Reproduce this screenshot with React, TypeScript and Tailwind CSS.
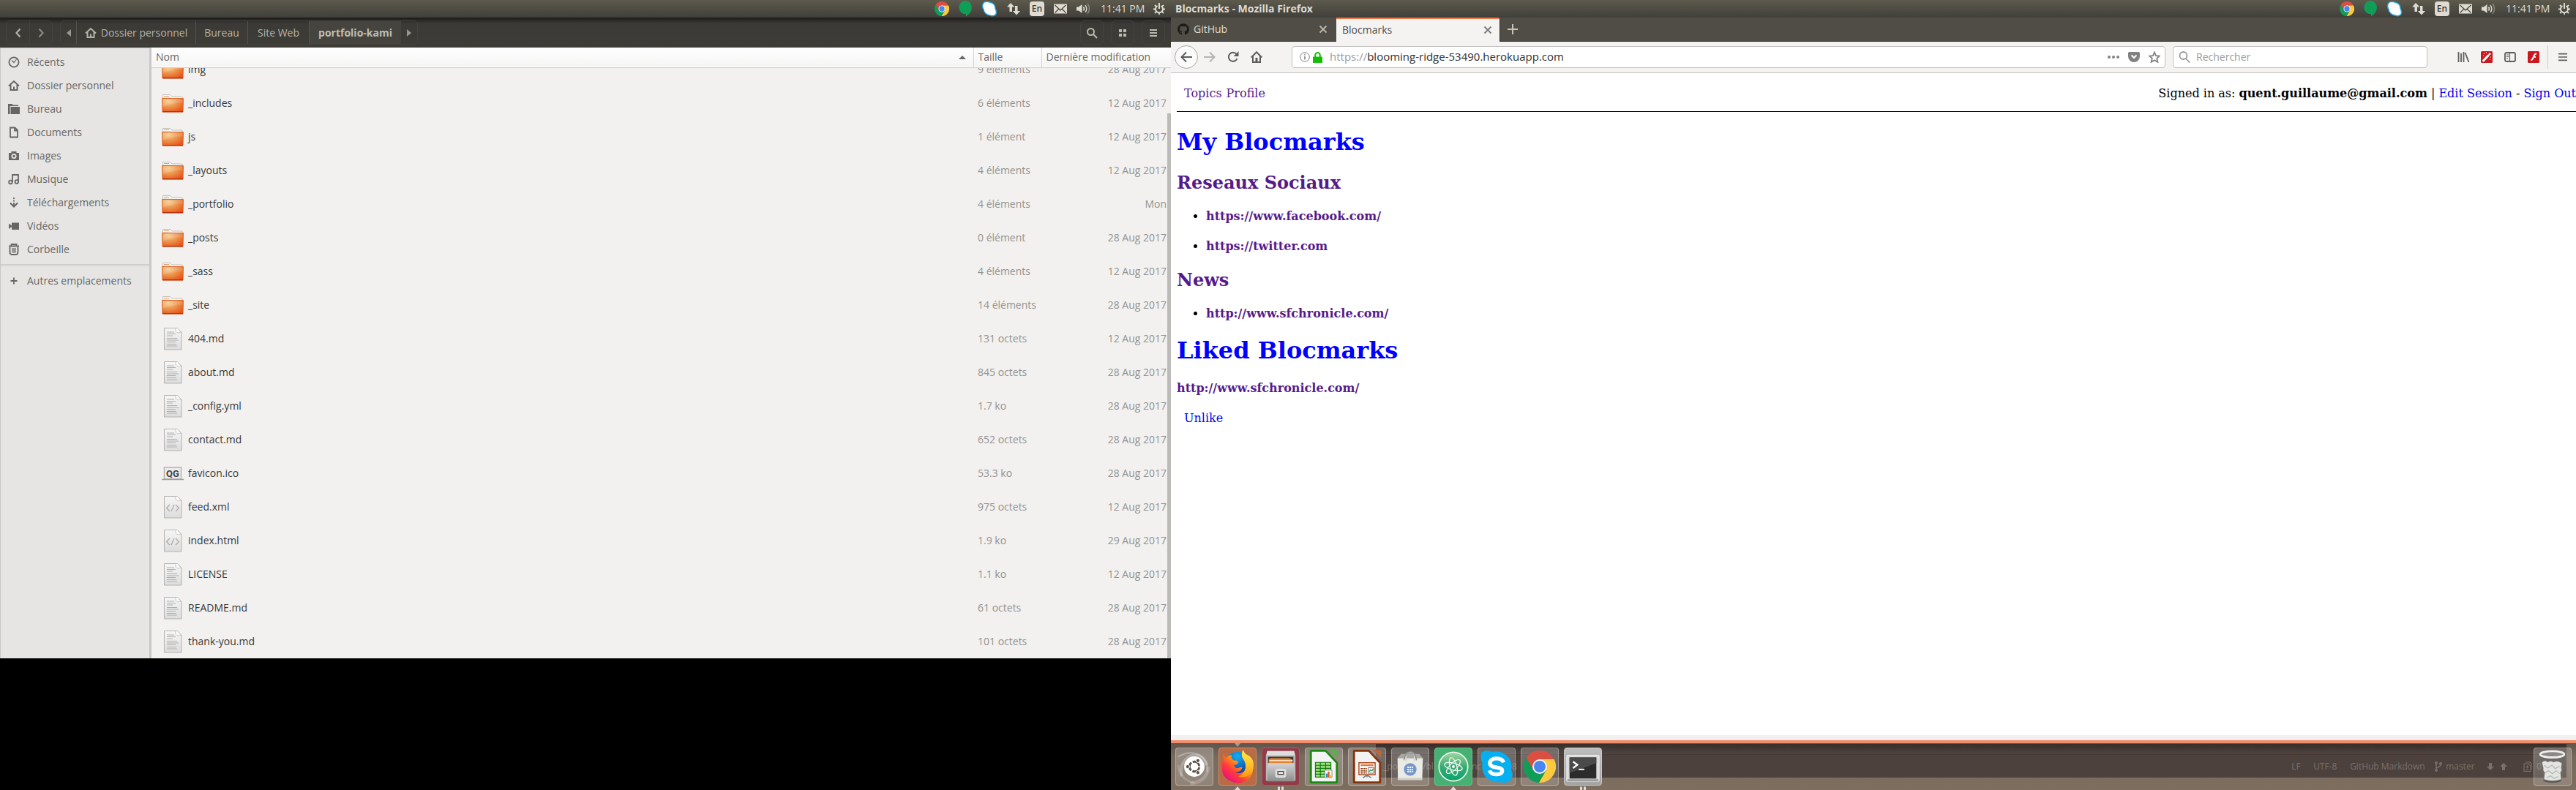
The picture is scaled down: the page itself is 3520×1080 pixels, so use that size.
import React from "react";
import { FaGithub } from "react-icons/fa";

const UI = "font-['Open_Sans','Noto_Sans',sans-serif]";

/* ---------- shared drawings ---------- */

function ChromeLogo({ className }: { className: string }) {
  return (
    <svg viewBox="2 2 44 44" className={className} aria-hidden="true">
      <path d="M43.6 14A22 22 0 0 0 5.54 12.03L15.34 29 24 24V14Z" fill="#db4f43" />
      <path d="M43.6 14A22 22 0 0 1 22.86 45.97L32.66 29 24 24V14Z" fill="#fdca3e" />
      <path d="M22.86 45.97A22 22 0 0 1 5.54 12.03L15.34 29 24 24 32.66 29Z" fill="#109d58" />
      <circle cx="24" cy="24" r="10" fill="#f4f4f4" />
      <circle cx="24" cy="24" r="8" fill="#4a86f0" />
    </svg>
  );
}

function HomeIcon({ className }: { className: string }) {
  return (
    <svg viewBox="0 0 16 16" className={className} fill="none" stroke="currentColor" strokeWidth="2" aria-hidden="true">
      <path d="M1 8.5 8 2l7 6.5M3.5 7v7h9V7M8 14V9.5" />
    </svg>
  );
}

/* ---------- top panel ---------- */

function Tray() {
  return (
    <div className="flex items-center gap-[13px] text-[#dfdbd2]">
      <ChromeLogo className="size-5" />
      <svg viewBox="0 0 18 22" className="h-[22px] w-[18px]" aria-hidden="true">
        <path d="M9 0a9 9 0 0 1 9 9.3C18 14 14.500 18.500 10 21.500V18.300A9 9 0 1 1 9 0Z" fill="#109d58" />
      </svg>
      <svg viewBox="0 0 22 22" className="size-[22px]" aria-hidden="true">
        <path d="M4 2C7 0 10 1.500 13 2.500c4 1 6 4 6 8 1.500 3 2.500 6 .5 8.500-2 2-5 2-8 1C7 19.500 3.500 16 3 12 1 9 .8 4.500 4 2Z" fill="#fff" stroke="#1ba4dd" strokeWidth="1.500" />
      </svg>
      <svg viewBox="0 0 18 18" className="size-[18px]" fill="currentColor" aria-hidden="true">
        <path d="M5 1 0 6.500h3.500V13h3.500V6.500h3.500ZM13 17.500l5-5.500h-3.500V5H11v7H7.800Z" />
      </svg>
      <span className="flex size-5 items-center justify-center rounded-sm bg-[#dfdbd2] text-xs font-semibold leading-none text-[#3f3d38]">En</span>
      <svg viewBox="0 0 18 14" className="h-[14px] w-[18px]" aria-hidden="true">
        <rect width="18" height="13" y=".5" fill="currentColor" rx=".5" />
        <path d="m1.500 2 7.500 7 7.500-7M1.500 12.500l5-5M16.500 12.500l-5-5" stroke="#4a4842" strokeWidth="1.300" fill="none" />
      </svg>
      <svg viewBox="0 0 20 16" className="h-4 w-5" fill="none" stroke="currentColor" strokeWidth="1.600" aria-hidden="true">
        <path d="M0 5.500h3L7.500 2v12L3 10.500H0Z" fill="currentColor" stroke="none" />
        <path d="M9.500 5.500a4 4 0 0 1 0 5M12 3.200a7.500 7.500 0 0 1 0 9.600" />
        <path d="M15 1a11 11 0 0 1 0 14" opacity=".4" />
      </svg>
      <span className="w-[59px] whitespace-nowrap text-sm leading-6">11:41 PM</span>
      <svg viewBox="0 0 16 16" className="size-4" fill="none" stroke="currentColor" aria-hidden="true">
        <path d="M5.500 4A5 5 0 1 0 10.500 4" strokeWidth="2" />
        <path d="M8 0v8" strokeWidth="2" />
        <path d="M0 8.500h3M13 8.500h3M2 14l2-2M14 14l-2-2M8 16v-2.500M2 3l2 2M14 3l-2 2" strokeWidth="1.800" />
      </svg>
    </div>
  );
}

function Panel({ title }: { title?: string }) {
  return (
    <header className="flex h-6 shrink-0 items-center justify-between bg-linear-to-b from-[#5d5a4d] to-[#403f3a] pl-[6px] pr-2">
      <h2 className="text-sm font-bold leading-6 text-[#dfdbd2]">{title}</h2>
      <Tray />
    </header>
  );
}

/* ---------- file manager ---------- */

const side = [
  ["Récents", "clock"],
  ["Dossier personnel", "home"],
  ["Bureau", "desk"],
  ["Documents", "doc"],
  ["Images", "cam"],
  ["Musique", "music"],
  ["Téléchargements", "down"],
  ["Vidéos", "video"],
  ["Corbeille", "bin"],
];

function SideIcon({ kind }: { kind: string }) {
  if (kind === "home") return <HomeIcon className="size-4" />;
  const solid = { fill: "currentColor", stroke: "none" };
  return (
    <svg viewBox="0 0 16 16" className="size-4" fill="none" stroke="currentColor" strokeWidth="1.800" aria-hidden="true">
      {kind === "clock" && (<><circle cx="8" cy="8" r="6.600" /><path d="m5 5.500 3 3L11.500 4" strokeWidth="1.200" /></>)}
      {kind === "desk" && (<path {...solid} d="M0 1h6v1.500h8V4H2.500v11H0ZM3.500 5H16v10H3.500Z" />)}
      {kind === "doc" && (<path d="M3 1.500h6.500L13 5v9.500H3ZM9 1.500V5.500h4" />)}
      {kind === "cam" && (<><path {...solid} d="M1 4h3.500V2h7v2H15v10H1Z" /><circle cx="8" cy="8.500" r="2.700" stroke="#e6e5e3" /></>)}
      {kind === "music" && (<><path d="M6 12V2h8v9" /><circle cx="3.500" cy="12" r="2.300" /><circle cx="11.800" cy="11.500" r="2.300" /></>)}
      {kind === "down" && (<><path d="M8 1v2M8 4.500v2M8 8v5" /><path d="m3 8.500 5 5 5-5" strokeWidth="2.200" /></>)}
      {kind === "video" && (<path {...solid} d="M5 3.500h10v9.500H5ZM1 4.500l4 3v1.500l-4 3Z" />)}
      {kind === "bin" && (<><path d="M1 3.500h14M4.500 3.500V1h7v2.500" /><path d="M2.500 5v6.500Q2.500 15 5 15h6q2.500 0 2.500-3.500V5" /><path d="M6 6v6.500M8 6v7M10 6v6.500" strokeWidth="1.200" /></>)}
      {kind === "plus" && (<path d="M8 3.500v9M3.500 8h9" />)}
    </svg>
  );
}

const files: [string, string, string, string][] = [
  ["img", "9 éléments", "28 Aug 2017", "folder"],
  ["_includes", "6 éléments", "12 Aug 2017", "folder"],
  ["js", "1 élément", "12 Aug 2017", "folder"],
  ["_layouts", "4 éléments", "12 Aug 2017", "folder"],
  ["_portfolio", "4 éléments", "Mon", "folder"],
  ["_posts", "0 élément", "28 Aug 2017", "folder"],
  ["_sass", "4 éléments", "12 Aug 2017", "folder"],
  ["_site", "14 éléments", "28 Aug 2017", "folder"],
  ["404.md", "131 octets", "12 Aug 2017", "text"],
  ["about.md", "845 octets", "28 Aug 2017", "text"],
  ["_config.yml", "1.7 ko", "28 Aug 2017", "text"],
  ["contact.md", "652 octets", "28 Aug 2017", "text"],
  ["favicon.ico", "53.3 ko", "28 Aug 2017", "ico"],
  ["feed.xml", "975 octets", "12 Aug 2017", "code"],
  ["index.html", "1.9 ko", "29 Aug 2017", "code"],
  ["LICENSE", "1.1 ko", "12 Aug 2017", "text"],
  ["README.md", "61 octets", "28 Aug 2017", "text"],
  ["thank-you.md", "101 octets", "28 Aug 2017", "text"],
];

function FileIcon({ kind }: { kind: string }) {
  return (
    <svg viewBox="0 0 32 32" className="size-8 shrink-0" aria-hidden="true">
      {kind === "folder" && (
        <>
          <path d="M2.500 9V4.500h10L15 7h14v3Z" fill="#f8f7f6" stroke="#c2bfba" />
          <path d="M4 6.500h7" stroke="#ee9a66" />
          <path d="M1.500 9.500h29l-.5 18.500H2Z" fill="url(#folder)" stroke="#d9692f" />
          <path d="M2 27.700h28" stroke="#b5300c" strokeWidth="1.300" />
          <path d="M2.500 10.500h27v5Q18 15 2.500 21Z" fill="#fff" opacity=".14" />
        </>
      )}
      {(kind === "text" || kind === "code") && (
        <>
          <path d="M4.500 1.500h18l5.500 6v23.500H4.500Z" fill="url(#paper)" stroke="#b4b3b1" />
          <path d="M20 1.500q-1 6 3.500 6.500 3-1.500 4.500 0l-5.500-6.500Z" fill="#fafafa" stroke="#bdbcba" strokeWidth=".8" />
          {kind === "text" ? (
            <path d="M8 7h10M8 9.500h12M8 12h8M8 15.500h14M8 18h16M8 20.500h12M8 23.500h13M8 26h14" stroke="#b1b0ae" strokeWidth="1" />
          ) : (
            <path d="m12 13-4.500 4.500L12 22M20 13l4.500 4.500L20 22M18 13l-4 9" stroke="#a8a7a5" strokeWidth="1.200" fill="none" />
          )}
        </>
      )}
      {kind === "ico" && (
        <>
          <path d="M4.500 8h23v16h-23Z" fill="#ececec" stroke="#b4b3b1" strokeWidth="1.500" />
          <path d="M1 24.500h30" stroke="#a09f9d" strokeWidth="1.500" />
          <text x="16" y="21" textAnchor="middle" fontSize="13" fontWeight="bold" fill="#444" fontFamily="Roboto, sans-serif">QG</text>
        </>
      )}
    </svg>
  );
}

const headBtn = "flex h-[33px] w-8 items-center justify-center rounded-md border border-[#45433f] text-[#bdbbae]";
const crumb = "flex items-center justify-center border-l border-[#55534c]";

function FileManager() {
  return (
    <section className={`flex flex-col bg-[#f2f1ef] text-sm ${UI}`}>
      <svg className="absolute size-0" aria-hidden="true">
        <defs>
          <radialGradient id="folder" cx=".3" cy=".2" r="1">
            <stop offset="0" stopColor="#f5cb8a" />
            <stop offset=".5" stopColor="#eb8b44" />
            <stop offset="1" stopColor="#e8430c" />
          </radialGradient>
          <linearGradient id="paper" x2="0" y2="1">
            <stop offset="0" stopColor="#f6f6f6" />
            <stop offset="1" stopColor="#dcdcdc" />
          </linearGradient>
        </defs>
      </svg>
      <div className="flex h-[41px] items-center justify-between bg-linear-to-b from-[#1d1c1a] via-[#3c3a36] via-20% to-[#3e3c37] px-2 text-[#b5b3a8]">
        <div className="flex items-center gap-[10px]">
          <div className="flex h-[33px] rounded-md border border-[#45433f]">
            <button type="button" aria-label="Précédent" className="flex w-8 items-center justify-center border-r border-[#45433f]">
              <svg viewBox="0 0 10 14" className="h-[14px] w-[10px]" fill="none" stroke="currentColor" strokeWidth="2.200"><path d="M7.500 1.500 2.500 7l5 5.500" /></svg>
            </button>
            <button type="button" aria-label="Suivant" className="flex w-[30px] items-center justify-center text-[#8b897f]">
              <svg viewBox="0 0 10 14" className="h-[14px] w-[10px]" fill="none" stroke="currentColor" strokeWidth="2.200"><path d="m2.500 1.500 5 5.500-5 5.500" /></svg>
            </button>
          </div>
          <nav className="flex h-[33px] overflow-hidden rounded-md border border-[#45433f]" aria-label="Chemin">
            <button type="button" aria-label="Reculer" className="flex w-[21px] items-center justify-center">
              <svg viewBox="0 0 6 10" className="h-[10px] w-[6px]" fill="#9a988d"><path d="M6 0v10L0 5Z" /></svg>
            </button>
            <button type="button" className={`${crumb} w-[163px] gap-[6px]`}><HomeIcon className="size-4" />Dossier personnel</button>
            <button type="button" className={`${crumb} w-[71px]`}>Bureau</button>
            <button type="button" className={`${crumb} w-[84px]`}>Site Web</button>
            <button type="button" className={`${crumb} w-[126px] bg-[#46443f] font-bold text-[#c0beb2]`}>portfolio-kami</button>
            <button type="button" aria-label="Avancer" className="flex w-[22px] items-center justify-center">
              <svg viewBox="0 0 6 10" className="h-[10px] w-[6px]" fill="#9a988d"><path d="M0 0v10l6-5Z" /></svg>
            </button>
          </nav>
        </div>
        <div className="flex gap-[10px]">
          <button type="button" aria-label="Rechercher" className={headBtn}>
            <svg viewBox="0 0 16 16" className="size-4" fill="none" stroke="currentColor" strokeWidth="2"><circle cx="6.500" cy="6.500" r="4.500" /><path d="m10 10 5 5" /></svg>
          </button>
          <button type="button" aria-label="Grille" className={headBtn}>
            <svg viewBox="0 0 16 16" className="size-4" fill="currentColor"><path d="M3 3h4v4H3ZM9 3h4v4H9ZM3 9h4v4H3ZM9 9h4v4H9Z" /></svg>
          </button>
          <button type="button" aria-label="Menu" className={headBtn}>
            <svg viewBox="0 0 16 16" className="size-4" fill="currentColor"><path d="M3 3h10v2H3ZM3 7h10v2H3ZM3 11h10v2H3Z" /></svg>
          </button>
        </div>
      </div>
      <div className="flex">
        <aside className="w-[207px] shrink-0 border-l border-r-3 border-t border-[#c9c8c6] bg-[#e6e5e3] pt-[3px] text-[#676664]">
          <ul>
            {side.map(([label, kind]) => (
              <li key={label}>
                <a href="#" className="flex h-8 items-center gap-[10px] pl-[10px]"><SideIcon kind={kind} />{label}</a>
              </li>
            ))}
          </ul>
          <div className="my-1 h-[3px] border-y border-[#cdccca]" />
          <a href="#" className="flex h-8 items-center gap-[10px] pl-[10px]"><SideIcon kind="plus" />Autres emplacements</a>
        </aside>
        <div className="relative grow">
          <table className="w-full table-fixed border-collapse text-left">
            <thead className="text-[#676664]">
              <tr className="h-[27px] border-b border-[#cfcecc] bg-linear-to-b from-white to-[#f5f5f4]">
                <th className="p-0 pl-[6px] pr-[10px] font-normal">
                  <div className="flex items-center justify-between">
                    Nom
                    <svg viewBox="0 0 10 5" className="h-[5px] w-[10px]" fill="currentColor" aria-hidden="true"><path d="M5 0l5 5H0Z" /></svg>
                  </div>
                </th>
                <th className="w-[93px] border-l border-[#d4d3d1] p-0 pl-[6px] font-normal">Taille</th>
                <th className="w-[177px] whitespace-nowrap border-l border-[#d4d3d1] p-0 pl-[6px] font-normal">Dernière modification</th>
              </tr>
            </thead>
            <tbody className="text-[#939290]">
              {files.map(([name, size, date, kind], i) => {
                const cell = i === 0 ? "flex h-[25px] items-end overflow-hidden" : "flex h-[46px] items-end";
                return (
                  <tr key={name}>
                    <td className="p-0 pl-[13px] text-[#383838]">
                      <div className={cell}><span className="flex h-[46px] shrink-0 items-center gap-[5px]"><FileIcon kind={kind} />{name}</span></div>
                    </td>
                    <td className="p-0 pl-[6px]">
                      <div className={cell}><span className="flex h-[46px] shrink-0 items-center">{size}</span></div>
                    </td>
                    <td className="p-0 pr-[6px]">
                      <div className={`${cell} justify-end`}><span className="flex h-[46px] shrink-0 items-center">{date}</span></div>
                    </td>
                  </tr>
                );
              })}
            </tbody>
          </table>
          <div className="absolute bottom-0 right-0 top-[90px] w-[5px] bg-[#bcbbba]" />
        </div>
      </div>
    </section>
  );
}

/* ---------- browser ---------- */

function CloseX() {
  return (
    <svg viewBox="0 0 12 12" className="size-3" fill="none" stroke="currentColor" strokeWidth="1.800"><path d="m1.500 1.500 9 9M10.500 1.500l-9 9" /></svg>
  );
}

const link = "text-[#551a8b]";
const navBtn = "flex size-8 items-center justify-center";

function Browser() {
  return (
    <section className="flex grow flex-col bg-white">
      <div className={`flex h-[33px] border-b border-[#33312d] bg-[#504d46] text-sm ${UI}`} role="tablist">
        <div role="tab" className="flex w-[226px] items-center gap-[6px] pl-[9px] pr-3 text-[#dedad0]">
          <FaGithub className="size-4 text-[#1b1a18]" />
          <span className="grow">GitHub</span>
          <button type="button" aria-label="Fermer GitHub" className="text-[#bdb9ae]"><CloseX /></button>
        </div>
        <div role="tab" aria-selected="true" className="-mb-px flex w-[223px] items-center border-t-2 border-[#f07746] bg-[#f4f3f2] pb-px pl-2 pr-[10px] text-[#4c4c4c]">
          <span className="grow">Blocmarks</span>
          <button type="button" aria-label="Fermer Blocmarks" className="text-[#77767a]"><CloseX /></button>
        </div>
        <button type="button" aria-label="Nouvel onglet" className="flex w-[34px] items-center justify-center border-l border-[#33312d] text-[#c9c5bb]">
          <svg viewBox="0 0 14 14" className="size-[14px]" stroke="currentColor" strokeWidth="2"><path d="M7 0v14M0 7h14" /></svg>
        </button>
      </div>

      <div className={`flex h-[43px] items-center border-b border-[#c4c2bf] bg-[#f4f3f2] pl-[5px] text-sm text-[#5d5d5d] ${UI}`}>
        <button type="button" aria-label="Page précédente" className={`${navBtn} rounded-full border border-[#a9a8a6] bg-[#fbfbfb]`}>
          <svg viewBox="0 0 16 16" className="size-4" fill="none" stroke="currentColor" strokeWidth="2"><path d="M16 8H1.500M8 1.500 1.500 8 8 14.500" /></svg>
        </button>
        <button type="button" aria-label="Page suivante" className={`${navBtn} text-[#b5b4b2]`}>
          <svg viewBox="0 0 16 16" className="size-4" fill="none" stroke="currentColor" strokeWidth="2"><path d="M0 8h14.500M8 1.500 14.500 8 8 14.500" /></svg>
        </button>
        <button type="button" aria-label="Actualiser" className={navBtn}>
          <svg viewBox="0 0 16 16" className="size-4" fill="none" stroke="currentColor" strokeWidth="2"><path d="M12.500 4A6 6 0 1 0 13.500 10" /><path d="M15.500 0v7H8.500Z" fill="currentColor" stroke="none" /></svg>
        </button>
        <button type="button" aria-label="Accueil" className={navBtn}>
          <svg viewBox="0 0 16 16" className="size-4" fill="none" stroke="currentColor" strokeWidth="2"><path d="M.8 8.500 8 1.200l7.200 7.300M3 7v8h10V7" /><path d="M6.500 15V9h3v6Z" fill="currentColor" stroke="none" /></svg>
        </button>
        <div className="ml-8 flex h-[30px] grow items-center rounded border border-[#c1bfbc] bg-white pl-[10px] pr-[6px] text-[15px]">
          <svg viewBox="0 0 14 14" className="size-[14px]" fill="none" stroke="#828181" aria-hidden="true"><circle cx="7" cy="7" r="6.300" /><path d="M7 6v4.500M7 3v1.500" strokeWidth="1.600" /></svg>
          <svg viewBox="0 0 14 16" className="ml-1 h-[15px] w-[13px]" aria-hidden="true"><path d="M0 7h14v9H0Z" fill="#12bc00" /><path d="M3.500 8V4.500a3.500 3.500 0 0 1 7 0V8" stroke="#12bc00" strokeWidth="2.200" fill="none" /></svg>
          <label htmlFor="url" className="ml-[10px] text-[#9b9a98]">https://</label>
          <input id="url" className="grow bg-transparent p-0 text-[#2f2f2f] outline-none" defaultValue="blooming-ridge-53490.herokuapp.com" />
          <div className="flex items-center gap-3 text-[#828181]">
            <svg viewBox="0 0 16 16" className="size-4" fill="currentColor"><circle cx="2" cy="8" r="2" /><circle cx="8" cy="8" r="2" /><circle cx="14" cy="8" r="2" /></svg>
            <svg viewBox="0 0 16 16" className="size-4"><path d="M1.500 1h13Q16 1 16 2.500V7A8 8 0 0 1 0 7V2.500Q0 1 1.500 1Z" fill="currentColor" /><path d="m4.500 5.500 3.500 3.500 3.500-3.500" stroke="#fff" strokeWidth="2" fill="none" /></svg>
            <svg viewBox="0 0 16 16" className="size-4" fill="none" stroke="currentColor" strokeWidth="1.800"><path d="m8 1.500 2 4.600 5 .4-3.800 3.300 1.200 5L8 12.200l-4.400 2.600 1.200-5L1 6.500l5-.4Z" /></svg>
          </div>
        </div>
        <div className="ml-[10px] flex h-[30px] w-[348px] items-center gap-[8px] rounded border border-[#c1bfbc] bg-white pl-[7px]">
          <svg viewBox="0 0 16 16" className="size-4" fill="none" stroke="#9b9a98" strokeWidth="1.800" aria-hidden="true"><circle cx="6.500" cy="6" r="5" /><path d="m10 10 5 5.500" /></svg>
          <input aria-label="Rechercher" placeholder="Rechercher" className="grow bg-transparent p-0 outline-none placeholder:text-[#9b9a98]" />
        </div>
        <div className="ml-[41px] flex items-center gap-4">
          <svg viewBox="0 0 16 16" className="size-4" fill="none" stroke="currentColor" strokeWidth="1.800"><path d="M1.500 1v14M5 3v12M8.500 1v14M10.500 2l5 13" /></svg>
          <svg viewBox="0 0 16 16" className="size-4">
            <rect width="16" height="16" rx="1.500" fill="#c9191f" />
            <path d="m3.500 13 6.500-7" stroke="#fff" strokeWidth="3" strokeLinecap="round" />
            <path d="m11 5 2-2.200" stroke="#fff" strokeWidth="2.600" />
            <path d="M4 3h1.500M7 2h1M3 6h1M13 8h1M12 11h1" stroke="#fff" strokeWidth="1.200" />
          </svg>
          <svg viewBox="0 0 16 16" className="size-4" fill="none" stroke="currentColor" strokeWidth="1.800"><rect x="1" y="2" width="14" height="12" rx="2" /><path d="M7.500 2v12M3 5h3M3 7.500h3M3 10h2" strokeWidth="1.200" /></svg>
          <svg viewBox="0 0 16 16" className="size-4"><rect width="16" height="16" rx="1.500" fill="#c9191f" /><path d="M12 3.500Q9 3.500 8 7.500T4.500 12.500M7 7.800h4" stroke="#fff" strokeWidth="1.900" fill="none" /></svg>
        </div>
        <div className="ml-[11px] h-8 w-px bg-[#cfcecc]" />
        <button type="button" aria-label="Ouvrir le menu" className="ml-3 mr-[10px] flex size-4 items-center justify-center">
          <svg viewBox="0 0 14 12" className="h-3 w-[12px]" fill="currentColor"><path d="M0 0h14v2H0ZM0 5h14v2H0ZM0 10h14v2H0Z" /></svg>
        </button>
      </div>

      <main className="grow pl-2 font-['DejaVu_Serif',serif] text-base leading-[19px]">
        <div className="flex h-[53px] items-center justify-between border-b border-black pl-[10px] pt-[3px]">
          <nav className="flex gap-[6px]">
            <a href="#" className={link}>Topics</a>
            <a href="#" className={link}>Profile</a>
          </nav>
          <p className="whitespace-nowrap text-black">
            Signed in as: <strong>quent.guillaume@gmail.com</strong> | <a href="#" className="text-[#0000ee]">Edit Session</a> - <a href="#" className="text-[#0000ee]">Sign Out</a>
          </p>
        </div>
        <h1 className="mt-[23px] text-[32px] font-bold leading-[37px] text-[#0000ff]">My Blocmarks</h1>
        <h2 className="mt-[23px] text-2xl font-bold leading-7"><a href="#" className={link}>Reseaux Sociaux</a></h2>
        <ul className="mt-[22px] list-disc space-y-[22px] pl-10 font-bold">
          <li><a href="#" className={link}>https://www.facebook.com/</a></li>
          <li><a href="#" className={link}>https://twitter.com</a></li>
        </ul>
        <h2 className="mt-[23px] text-2xl font-bold leading-7"><a href="#" className={link}>News</a></h2>
        <ul className="mt-[22px] list-disc pl-10 font-bold">
          <li><a href="#" className={link}>http://www.sfchronicle.com/</a></li>
        </ul>
        <h1 className="mt-[23px] text-[32px] font-bold leading-[37px] text-[#0000ff]">Liked Blocmarks</h1>
        <p className="mt-[23px] font-bold"><a href="#" className={link}>http://www.sfchronicle.com/</a></p>
        <p className="mt-[22px] pl-[10px]"><a href="#" className="text-[#0000ee]">Unlike</a></p>
      </main>
      <div className="h-[11px] shrink-0 border-b-4 border-[#f28c69] bg-[#f1f0ee]" />
    </section>
  );
}

/* ---------- launcher ---------- */

const svgTile = "size-full";

function OfficeDoc({ dark, mid, children }: { dark: string; mid: string; children: React.ReactNode }) {
  return (
    <svg viewBox="0 0 52 52" className={svgTile} aria-hidden="true">
      <path d="M8 2h21l17 18v28q0 2-2 2H8q-2 0-2-2V4q0-2 2-2Z" fill={dark} />
      <path d="M9 5h19l15 16v26H9Z" fill="#f3f3f3" />
      <path d="M34 2h10q2 0 2 2v10Z" fill={mid} />
      {children}
    </svg>
  );
}

function Art({ app }: { app: string }) {
  switch (app) {
    case "Dash":
      return (
        <svg viewBox="0 0 52 52" className={svgTile} aria-hidden="true">
          <g fill="none" stroke="#fff">
            <path d="M3 12Q20 2 34 10 46 18 44 34" opacity=".3" strokeWidth="2" />
            <path d="M8 40Q4 20 20 11 38 6 44 24" opacity=".25" strokeWidth="4" />
            <path d="M20 50Q44 48 46 26" opacity=".2" strokeWidth="5" />
            <path d="M3 24Q5 44 26 49" opacity=".18" strokeWidth="3" />
          </g>
          <circle cx="26" cy="26" r="14.500" fill="#fff" />
          <circle cx="26" cy="26" r="7" fill="none" stroke="#5c4f47" strokeWidth="3" strokeDasharray="12.700 2" strokeDashoffset="-1" />
          <g fill="#5c4f47" stroke="#fff"><circle cx="16.500" cy="26" r="2.700" /><circle cx="31" cy="17.500" r="2.700" /><circle cx="31" cy="34.500" r="2.700" /></g>
        </svg>
      );
    case "Firefox":
      return (
        <svg viewBox="0 0 52 52" className={svgTile} aria-hidden="true">
          <defs>
            <linearGradient id="fx" x1=".9" y1=".1" x2=".2" y2=".9"><stop offset="0" stopColor="#ffe228" /><stop offset=".4" stopColor="#ff9417" /><stop offset=".7" stopColor="#ff3b3c" /><stop offset="1" stopColor="#e8127a" /></linearGradient>
            <linearGradient id="fy" x2="0" y2="1"><stop offset="0" stopColor="#fff04d" /><stop offset="1" stopColor="#ff9a12" /></linearGradient>
            <radialGradient id="globe" cx=".5" cy=".2" r=".8"><stop offset="0" stopColor="#0fb0f5" /><stop offset="1" stopColor="#123a9c" /></radialGradient>
          </defs>
          <circle cx="26" cy="21" r="16" fill="url(#globe)" />
          <path d="M6 7q1 5 4 7 3-5 8-4-2 4 2 7 6 0 7 3-1 3-6 4 1 5 6 4 4-2 6-1-2 7-10 7 6 3 12-1 8-7 4-17l9 6q2 16-9 24-11 6-22 1Q3 41 4 26 4 19 6 16Z" fill="url(#fx)" />
          <path d="M34 2q-4 7 0 13 6 8 2 17-3 6-9 8 9 3 17-3 7-9 4-19-2-5-7-8-6-3-7-8Z" fill="url(#fy)" />
        </svg>
      );
    case "Fichiers":
      return (
        <svg viewBox="0 0 52 52" className={svgTile} aria-hidden="true">
          <path d="M7 4h38l2 7v35H5V11Z" fill="#b9b9b9" />
          <path d="M7 4h38l1.500 6h-41Z" fill="#dedede" />
          <path d="M8 12h36v10H8Z" fill="#3d3631" />
          <path d="M11 14h27l5 2v6H9v-6Z" fill="#e88332" /><path d="M10 17.500h33" stroke="#fbe3c4" strokeWidth="1.500" />
          <path d="M7 21h38v26H7Z" fill="url(#steel)" />
          <defs><linearGradient id="steel" x2="0" y2="1"><stop offset="0" stopColor="#d4d4d4" /><stop offset="1" stopColor="#8c8c8c" /></linearGradient></defs>
          <rect x="19" y="30" width="14" height="11" rx="2" fill="#d8d8d8" stroke="#f0f0f0" />
          <rect x="22" y="33" width="8" height="4" fill="#eee" stroke="#333" strokeWidth="1.200" />
        </svg>
      );
    case "Calc":
      return (
        <OfficeDoc dark="#188a12" mid="#5fae4c">
          <path d="M14 20h22v21H14Z" fill="#97e07c" />
          <path d="M14 20h22v21H14ZM14 24.200h22M14 28.400h22M14 32.600h22M14 36.800h22M21 20v21M28.500 20v21" stroke="#16780f" strokeWidth="1.200" fill="none" />
          <path d="M27.500 31h10v10.500h-10Z" fill="#fff" stroke="#888" />
          <path d="M29 36h2.500v5H29Z" fill="#2a8ad8" /><path d="M31.500 33H34v8h-2.500Z" fill="#e8541c" /><path d="M34 38h2.500v3H34Z" fill="#f3b71c" />
        </OfficeDoc>
      );
    case "Impress":
      return (
        <OfficeDoc dark="#82340b" mid="#b5673f">
          <path d="M14.500 20.500h23v17h-23Z" fill="#fff" stroke="#a8481a" strokeWidth="1.500" />
          <path d="M17 24h18" stroke="#d97a42" strokeWidth="2.500" />
          <path d="M17 29h9M17 32h9M17 35h9" stroke="#8a3a10" strokeWidth="1.800" strokeDasharray="3 1" />
          <path d="M27.500 27.500h8v8h-8Z" fill="#eef" stroke="#777" /><path d="m29 33 2-2 2 1 2-3" stroke="#2a9a2a" strokeWidth="1.300" fill="none" />
          <path d="m26 38-6 4M26 38l6 4M26 38v3" stroke="#777" strokeWidth="1.500" />
        </OfficeDoc>
      );
    case "Logithèque":
      return (
        <svg viewBox="0 0 52 52" className={svgTile} aria-hidden="true">
          <path d="M13 8h26l5 6H8Z" fill="#a9a8a4" />
          <path d="M8 14h36l-1 31H8.500Z" fill="#ebebe6" /><path d="M8.500 45H43v-3H8.500Z" fill="#cfcfca" />
          <path d="M20 18V10q0-4 6-4t6 4v8" fill="none" stroke="#d2d1cd" strokeWidth="2" />
          <path d="M17 17q2-12 9-12t9 12" fill="none" stroke="#8c8b87" strokeWidth="1.500" />
          <circle cx="26" cy="30" r="9" fill="#7597cb" />
          <path d="M22 26h2v2h-2ZM25 26h2v2h-2ZM28 26h2v2h-2ZM22 29h2v2h-2ZM25 29h2v2h-2ZM28 29h2v2h-2ZM22 32h2v2h-2ZM25 32h2v2h-2ZM28 32h2v2h-2Z" fill="#fff" />
        </svg>
      );
    case "Atom":
      return (
        <svg viewBox="0 0 52 52" className={svgTile} aria-hidden="true">
          <defs><linearGradient id="atom" x2="0" y2="1"><stop offset="0" stopColor="#a3d8a0" /><stop offset=".5" stopColor="#3aab74" /><stop offset="1" stopColor="#0aa26c" /></linearGradient></defs>
          <circle cx="26" cy="26" r="20.500" fill="url(#atom)" stroke="#e9f4ec" strokeWidth="1.800" />
          <g fill="none" stroke="#f0f8f2" strokeWidth="1.300">
            <ellipse cx="26" cy="26" rx="13" ry="5" transform="rotate(15 26 26)" />
            <ellipse cx="26" cy="26" rx="13" ry="5" transform="rotate(75 26 26)" />
            <ellipse cx="26" cy="26" rx="13" ry="5" transform="rotate(135 26 26)" />
          </g>
          <circle cx="26" cy="26" r="2" fill="#fff" />
        </svg>
      );
    case "Skype":
      return (
        <svg viewBox="0 0 52 52" className={svgTile} aria-hidden="true">
          <path d="M5 6q6-5 14-1Q34 2 43 13q6 8 4 18 4 8-1 14-6 6-14 3-13 2-22-8-6-9-4-19-4-8-1-15Z" fill="#06aff0" />
          <path d="M36 18.500Q34 13 26 13c-6 0-9.500 3-9.500 6.500 0 9 17.500 3.500 17.500 11 0 3-3 5-7.500 5Q18 36 16 30" transform="translate(0 1.500)" fill="none" stroke="#fff" strokeWidth="5.500" />
        </svg>
      );
    case "Chrome":
      return <span className="flex size-full items-center justify-center"><ChromeLogo className="size-11" /></span>;
    case "Terminal":
      return (
        <svg viewBox="0 0 52 52" className={svgTile} aria-hidden="true">
          <rect x="3" y="10" width="46" height="37" rx="1" fill="#d9d9d9" stroke="#f2f2f2" />
          <path d="M4 44h44v3H4Z" fill="#9b9b9b" />
          <rect x="7" y="13" width="38" height="30" fill="#2b2b2b" />
          <path d="M7 13h38v8L7 35Z" fill="#4a4a4a" />
          <path d="m12 19 6 4.500-6 4.500" stroke="#fff" strokeWidth="2.500" fill="none" /><path d="M20 30h8" stroke="#fff" strokeWidth="2" />
        </svg>
      );
    default:
      return (
        <svg viewBox="0 0 52 52" className={svgTile} aria-hidden="true">
          <path d="M9 9h34l-4 36q-13 5-26 0Z" fill="#6f6a66" opacity=".8" />
          <path d="M11 20q5-4 8 0 5-3 8 0 5-3 12 1l-1 7q2 3-1 6l1 10q-12 4-24 0l1-10q-3-2-2-6Z" fill="#e3e5e2" />
          <path d="m14 24 5 4 6-4 5 5 6-4M15 35l5-3 6 4 5-4 5 4M18 42l5-3 5 4 6-3" stroke="#b4b7b2" strokeWidth="1.300" fill="none" />
          <ellipse cx="25.500" cy="8.500" rx="17" ry="4.500" fill="#8b8784" stroke="#eeeeec" strokeWidth="3" />
          <path d="M13 46q13 4 25 0" stroke="#55504d" strokeWidth="1.500" fill="none" />
        </svg>
      );
  }
}

const glass = "bg-linear-to-b from-white/25 to-white/15 border-white/30";
const apps: [string, string, string][] = [
  ["Dash", glass, ""],
  ["Firefox", "bg-[#b86c45] border-[#cf8a66]", "focus"],
  ["Fichiers", "bg-[#913b49] border-[#a85a66]", "two"],
  ["Calc", glass, ""],
  ["Impress", glass, ""],
  ["Logithèque", glass, ""],
  ["Atom", "bg-[#46b173] border-[#6cc58f]", "one"],
  ["Skype", glass, ""],
  ["Chrome", glass, ""],
  ["Terminal", "bg-linear-to-b from-[#bcbcbc] to-[#a3a3a3] border-[#c9c9c9]", "two"],
];

function Tile({ name, look, state }: { name: string; look: string; state: string }) {
  return (
    <button type="button" aria-label={name} className={`relative size-[52px] rounded border ${look}`}>
      <Art app={name} />
      {state === "focus" && (
        <svg viewBox="0 0 8 5" className="absolute -top-[7px] left-[21px] h-[5px] w-2" fill="#a09c99"><path d="M0 0h8L4 5Z" /></svg>
      )}
      {(state === "focus" || state === "one") && (
        <svg viewBox="0 0 8 5" className="absolute -bottom-[7px] left-[21px] h-[5px] w-2" fill="#dddad7"><path d="M0 5h8L4 0Z" /></svg>
      )}
      {state === "two" && (
        <svg viewBox="0 0 8 5" className="absolute -bottom-[7px] left-[21px] h-[5px] w-2" fill="#dddad7"><path d="M0 5V1l1.500-1L3 1v4ZM5 5V1l1.500-1L8 1v4Z" /></svg>
      )}
    </button>
  );
}

function Launcher() {
  return (
    <footer className="relative h-16 shrink-0 bg-linear-to-b from-[#5f554c] via-[#786a5d] via-30% to-[#7e6e60] px-[6px] pt-[6px]">
      <div className={`absolute left-[280px] right-[13px] top-px flex h-[46px] flex-col bg-[#4c413c] text-xs text-[#7b706b] ${UI}`}>
        <div className="h-[15px] border-b border-[#453a36] bg-linear-to-b from-[#352e2b] to-[#51453f]" />
        <div className="flex grow items-center justify-between pl-[10px] pr-[34px]">
          <div className="flex">
            <span className="w-[54px]">_po</span>
            <span className="w-[67px]">/bl</span>
            <span className="w-[55px]">nc</span>
            <span>8</span>
          </div>
          <div className="flex items-center">
            <span className="w-[30px]">LF</span>
            <span className="w-[50px]">UTF-8</span>
            <span className="w-[116px] whitespace-nowrap">GitHub Markdown</span>
            <svg viewBox="0 0 10 14" className="mr-[5px] h-[14px] w-[10px]" fill="none" stroke="currentColor" strokeWidth="1.500"><circle cx="2" cy="2" r="1.300" /><circle cx="2" cy="12" r="1.300" /><circle cx="8" cy="3" r="1.300" /><path d="M2 3v8M8 4q0 3-6 5" /></svg>
            <span className="w-[56px]">master</span>
            <svg viewBox="0 0 28 10" className="mr-[22px] h-[10px] w-7" fill="currentColor"><path d="M3 0h4v5h3l-5 5-5-5h3ZM21 10h4V5h3l-5-5-5 5h3Z" /></svg>
            <svg viewBox="0 0 12 14" className="mr-[6px] h-[14px] w-3" fill="none" stroke="currentColor" strokeWidth="1.200"><path d="M1 3h6l3 3v7.500H1ZM3 1h6l3 3v7M5.500 5.500v4M3.500 7.500h4M3.500 11.500h4" /></svg>
            <span>0</span>
          </div>
        </div>
      </div>
      <nav className="relative flex justify-between" aria-label="Lanceur">
        <div className="flex gap-[7px]">
          {apps.map(([name, look, state]) => (
            <Tile key={name} name={name} look={look} state={state} />
          ))}
        </div>
        <Tile name="Corbeille" look={glass} state="" />
      </nav>
    </footer>
  );
}

export default function App() {
  return (
    <div className="grid min-h-screen grid-cols-[5fr_6fr] bg-black">
      <div className={`min-w-0 ${UI}`}>
        <Panel />
        <FileManager />
      </div>
      <div className="flex min-w-0 flex-col">
        <div className={UI}><Panel title="Blocmarks - Mozilla Firefox" /></div>
        <Browser />
        <Launcher />
      </div>
    </div>
  );
}
